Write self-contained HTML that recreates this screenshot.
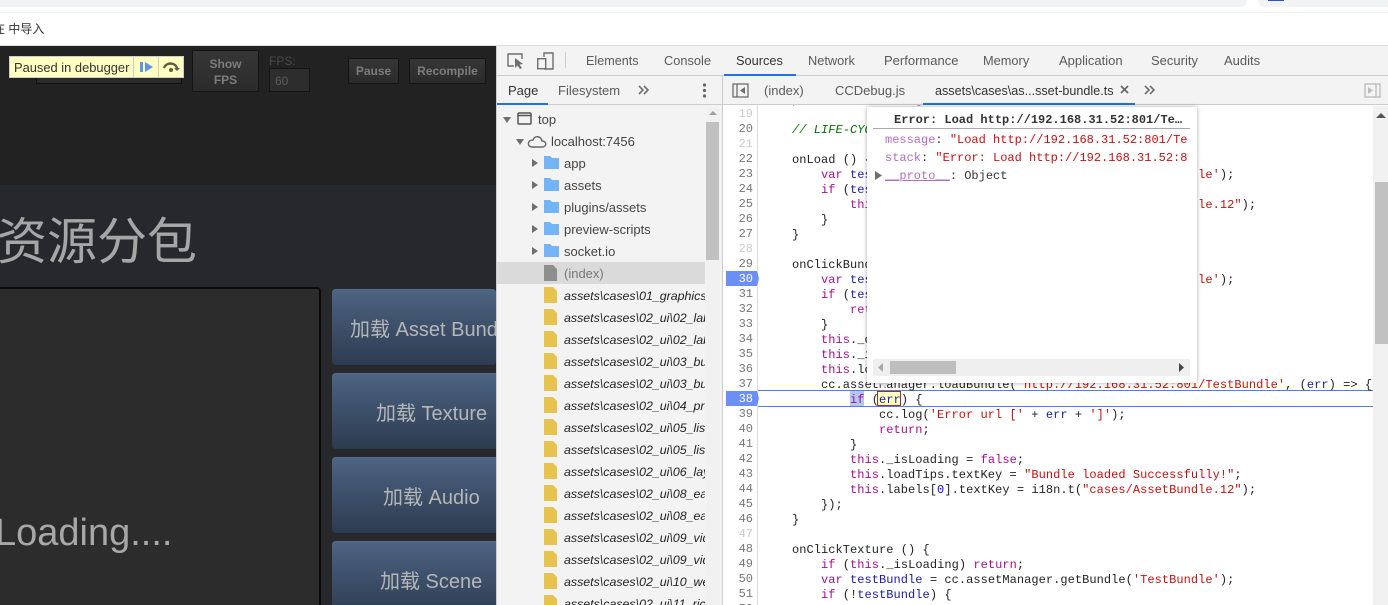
<!DOCTYPE html>
<html><head><meta charset="utf-8"><style>
html,body{margin:0;padding:0;width:1388px;height:605px;overflow:hidden;background:#fff}
body{position:relative;font-family:"Liberation Sans","Noto Sans CJK SC",sans-serif}
.a{position:absolute;white-space:nowrap}
.btn{position:absolute;left:332px;width:170px;height:76px;border-radius:4px;background:linear-gradient(#4d6483,#2d3b50);color:#b4b6b8;font-size:20px;line-height:82px;box-sizing:border-box;white-space:nowrap;box-shadow:inset 0 1px 0 #566d8c}
.gb{position:absolute;box-sizing:border-box;background:linear-gradient(#363636,#2b2b2b);border:1px solid #141414;border-radius:2px;color:#7c7c7c;font:bold 12px/16px "Liberation Sans",sans-serif;text-align:center}
.t{position:absolute;font-size:13px;line-height:16px;color:#5a5a5a;white-space:nowrap}
.row{position:absolute;height:22px;line-height:24px;font-size:13px;color:#444;white-space:nowrap;left:0;width:208px;overflow:hidden}
.row span{position:absolute;left:67px}
.f span{font-style:italic;font-size:12.4px;color:#222}
.ic{position:absolute;left:47px;top:3px}
.ar{position:absolute;width:0;height:0;border-left:6px solid #6e6e6e;border-top:4px solid transparent;border-bottom:4px solid transparent;left:35px;top:7px}
pre{margin:0;font:12px/15px "Liberation Mono",monospace;white-space:pre !important}
.k{color:#aa0d91}.s{color:#c81010}.v{color:#1a1aa6}.c{color:#007400;font-style:italic}.n{color:#1c00cf}
.g{color:#ccc}
</style></head><body>
<div class="a" style="left:0;top:0;width:1247px;height:7px;background:#f1f3f4;border-radius:0 0 8px 0"></div>
<div class="a" style="left:1258px;top:0;width:130px;height:7px;background:#f1f3f4;border-radius:0 0 0 8px"></div>
<div class="a" style="left:1268px;top:0;width:16px;height:1px;background:#2b50d8"></div>
<div class="a" style="left:0;top:12px;width:1388px;height:1px;background:#f1f3f4"></div>
<div class="a" style="left:-7px;top:21px;font-size:12px;line-height:17px;color:#333">在 中导入</div>
<div class="a" style="left:0;top:45px;width:1388px;height:1px;background:#ddd"></div>

<div class="a" style="left:0;top:46px;width:496px;height:559px;background:#27282c;overflow:hidden">
  <div class="a" style="left:0;top:0;width:496px;height:139px;background:#222"></div>
  <div class="a" style="left:-3px;top:161px;font-size:50px;line-height:62px;color:#a6a6a6;font-family:'Noto Sans CJK SC',sans-serif">资源分包</div>
  <div class="a" style="left:-20px;top:241px;width:341px;height:340px;background:#2c2c2c;border:1px solid #0a0a0a;border-width:2px 2px 0 0;border-radius:4px;box-sizing:border-box"></div>
  <div class="a" style="left:-5px;top:465px;font-size:38px;line-height:44px;color:#a8a8a8">Loading....</div>
  <div class="btn" style="top:243px;padding-left:18px;width:164px;overflow:hidden">加载 Asset Bundle</div>
  <div class="btn" style="top:327px;padding-left:44px">加载 Texture</div>
  <div class="btn" style="top:411px;padding-left:51px">加载 Audio</div>
  <div class="btn" style="top:495px;padding-left:48px">加载 Scene</div>
  <div class="a" style="left:36px;top:12px;width:146px;height:26px;background:#2a2a2a;border:1px solid #111;box-sizing:border-box"></div>
  <div class="gb" style="left:192px;top:4px;width:67px;height:42px;padding-top:5px">Show<br>FPS</div>
  <div class="a" style="left:269px;top:7px;font-size:12px;line-height:16px;color:#4a4a4a">FPS:</div>
  <div class="a" style="left:269px;top:22px;width:41px;height:24px;background:#2d2d2d;border:1px solid #141414;box-sizing:border-box;color:#5c5c5c;font-size:12px;line-height:24px;padding-left:5px">60</div>
  <div class="gb" style="left:348px;top:12px;width:51px;height:26px;line-height:25px">Pause</div>
  <div class="gb" style="left:409px;top:12px;width:77px;height:26px;line-height:25px">Recompile</div>
</div>

<div class="a" style="left:9px;top:56px;width:175px;height:22px;background:#ffffc2;border:1px solid #ccc;box-sizing:border-box"></div>
<div class="a" style="left:14px;top:60px;font-size:12.9px;line-height:16px;color:#333">Paused in debugger</div>
<div class="a" style="left:133px;top:57px;width:1px;height:20px;background:#ccc"></div>
<div class="a" style="left:158px;top:57px;width:1px;height:20px;background:#ccc"></div>
<svg class="a" style="left:139px;top:61px" width="15" height="12"><rect x="1" y="1" width="3" height="10" fill="#5f95ea"/><path d="M6 1L14 6L6 11Z" fill="#5f95ea"/></svg>
<svg class="a" style="left:162px;top:61px" width="19" height="12"><path d="M2 7C4 1 13 1 15 7" fill="none" stroke="#5e5e46" stroke-width="2.4"/><path d="M12 7h6l-3 3z" fill="#5e5e46"/><circle cx="9" cy="9" r="2" fill="#5e5e46"/></svg>

<!-- devtools -->
<div class="a" style="left:496px;top:46px;width:892px;height:559px;background:#f3f3f3;overflow:hidden">
  <div class="a" style="left:0;top:0;width:1px;height:559px;background:#ccc"></div>
  <div class="a" style="left:1px;top:29px;width:891px;height:1px;background:#ccc"></div>
  <div class="a" style="left:1px;top:58px;width:891px;height:1px;background:#ccc"></div>
  <div class="a" style="left:226px;top:30px;width:1px;height:529px;background:#ccc"></div>
  <div class="a" style="left:228px;top:28px;width:72px;height:2px;background:#1a73e8"></div>
  <div class="a" style="left:1px;top:57px;width:51px;height:2px;background:#1a73e8"></div>
  <div class="a" style="left:427px;top:57px;width:212px;height:2px;background:#1a73e8"></div>
</div>
<svg class="a" style="left:506px;top:52px" width="20" height="18"><path d="M8 14H2V2H16V7" fill="none" stroke="#6e6e6e" stroke-width="1.4"/><path d="M9 6L9 16L11.5 13.5L14 17L16 16L13.5 12.5L17 12Z" fill="#6e6e6e"/></svg>
<svg class="a" style="left:535px;top:51px" width="20" height="19"><path d="M9 6V2H18V18H9" fill="none" stroke="#6e6e6e" stroke-width="1.4"/><rect x="2.7" y="7.7" width="8" height="10" fill="#f3f3f3" stroke="#6e6e6e" stroke-width="1.4"/></svg>
<div class="a" style="left:565px;top:52px;width:1px;height:16px;background:#ccc"></div>
<div class="t" style="left:586px;top:53px;font-size:12.6px">Elements</div>
<div class="t" style="left:664px;top:53px;font-size:12.8px">Console</div>
<div class="t" style="left:736px;top:53px;color:#333;font-size:12.8px">Sources</div>
<div class="t" style="left:808px;top:53px;font-size:12.8px">Network</div>
<div class="t" style="left:884px;top:53px">Performance</div>
<div class="t" style="left:983px;top:53px;font-size:12.8px">Memory</div>
<div class="t" style="left:1059px;top:53px">Application</div>
<div class="t" style="left:1151px;top:53px">Security</div>
<div class="t" style="left:1224px;top:53px">Audits</div>

<div class="t" style="left:508px;top:83px;color:#333">Page</div>
<div class="t" style="left:558px;top:83px">Filesystem</div>
<svg class="a" style="left:638px;top:85px" width="12" height="10"><path d="M1 1L5 5L1 9M6 1L10 5L6 9" fill="none" stroke="#6e6e6e" stroke-width="1.6"/></svg>
<svg class="a" style="left:702px;top:83px" width="5" height="15"><circle cx="2.5" cy="2" r="1.6" fill="#666"/><circle cx="2.5" cy="7.5" r="1.6" fill="#666"/><circle cx="2.5" cy="13" r="1.6" fill="#666"/></svg>

<svg class="a" style="left:732px;top:83px" width="18" height="15"><rect x="1" y="1" width="15" height="13" fill="none" stroke="#6e6e6e" stroke-width="1.3"/><path d="M5 1V14" stroke="#6e6e6e" stroke-width="1.3"/><path d="M13 4L8 7.5L13 11Z" fill="#6e6e6e"/></svg>
<div class="t" style="left:764px;top:83px">(index)</div>
<div class="t" style="left:835px;top:83px">CCDebug.js</div>
<div class="t" style="left:935px;top:83px;color:#333;font-size:12.6px">assets\cases\as...sset-bundle.ts</div>
<svg class="a" style="left:1120px;top:85px" width="9" height="9"><path d="M1 1L8 8M8 1L1 8" stroke="#666" stroke-width="1.7"/></svg>
<svg class="a" style="left:1144px;top:85px" width="12" height="10"><path d="M1 1L5 5L1 9M6 1L10 5L6 9" fill="none" stroke="#6e6e6e" stroke-width="1.6"/></svg>
<svg class="a" style="left:1364px;top:83px" width="18" height="15"><rect x="1" y="1" width="15" height="13" fill="none" stroke="#bbb" stroke-width="1.3"/><path d="M12 1V14" stroke="#bbb" stroke-width="1.3"/><path d="M4 4L9 7.5L4 11Z" fill="#bbb"/></svg>

<!-- navigator -->
<div class="a" style="left:497px;top:108px;width:225px;height:497px;overflow:hidden;background:#f3f3f3">
  <div class="a" style="left:209px;top:0;width:14px;height:497px;background:#f1f1f1"></div>
  <div class="a" style="left:209px;top:14px;width:13px;height:138px;background:#c1c1c1"></div>
  <svg class="a" style="left:211px;top:0" width="10" height="8"><path d="M1 7L5 3L9 7Z" fill="#a0a0a0"/></svg>
  <div class="row" style="top:0;width:208px"><i class="ar" style="left:6px;top:9px;border-top:6px solid #6e6e6e;border-left:4px solid transparent;border-right:4px solid transparent;border-bottom:0"></i><svg class="ic" style="left:20px;top:4px" width="15" height="13"><rect x="1" y="1" width="13" height="11" rx="1" fill="none" stroke="#555" stroke-width="1.5"/><path d="M1 3.5H14" stroke="#555" stroke-width="1.5"/></svg><span style="left:41px">top</span></div>
  <div class="row" style="top:22px"><i class="ar" style="left:19px;top:9px;border-top:6px solid #6e6e6e;border-left:4px solid transparent;border-right:4px solid transparent;border-bottom:0"></i><svg class="ic" style="left:30px;top:5px" width="20" height="13"><path d="M5 12H15C20 12 20 6 15 6C14 1 8 0 6 5C0 5 0 12 5 12Z" fill="none" stroke="#666" stroke-width="1.4"/></svg><span style="left:54px">localhost:7456</span></div>
  <div class="row" style="top:44px"><i class="ar"></i><svg class="ic" width="16" height="15"><path d="M0 1H6L8 3H15V14H0Z" fill="#72b4f5"/></svg><span>app</span></div>
  <div class="row" style="top:66px"><i class="ar"></i><svg class="ic" width="16" height="15"><path d="M0 1H6L8 3H15V14H0Z" fill="#72b4f5"/></svg><span>assets</span></div>
  <div class="row" style="top:88px"><i class="ar"></i><svg class="ic" width="16" height="15"><path d="M0 1H6L8 3H15V14H0Z" fill="#72b4f5"/></svg><span>plugins/assets</span></div>
  <div class="row" style="top:110px"><i class="ar"></i><svg class="ic" width="16" height="15"><path d="M0 1H6L8 3H15V14H0Z" fill="#72b4f5"/></svg><span>preview-scripts</span></div>
  <div class="row" style="top:132px"><i class="ar"></i><svg class="ic" width="16" height="15"><path d="M0 1H6L8 3H15V14H0Z" fill="#72b4f5"/></svg><span>socket.io</span></div>
  <div class="row" style="top:154px;background:#dadada"><svg class="ic" width="14" height="16"><path d="M0 0H9L13 4V16H0Z" fill="#8e8e8e"/></svg><span style="color:#777">(index)</span></div>
  <div class="row f" style="top:176px"><svg class="ic" width="14" height="16"><path d="M0 0H9L13 4V16H0Z" fill="#e6c24f"/></svg><span>assets\cases\01_graphics</span></div>
  <div class="row f" style="top:198px"><svg class="ic" width="14" height="16"><path d="M0 0H9L13 4V16H0Z" fill="#e6c24f"/></svg><span>assets\cases\02_ui\02_label</span></div>
  <div class="row f" style="top:220px"><svg class="ic" width="14" height="16"><path d="M0 0H9L13 4V16H0Z" fill="#e6c24f"/></svg><span>assets\cases\02_ui\02_label</span></div>
  <div class="row f" style="top:242px"><svg class="ic" width="14" height="16"><path d="M0 0H9L13 4V16H0Z" fill="#e6c24f"/></svg><span>assets\cases\02_ui\03_button</span></div>
  <div class="row f" style="top:264px"><svg class="ic" width="14" height="16"><path d="M0 0H9L13 4V16H0Z" fill="#e6c24f"/></svg><span>assets\cases\02_ui\03_button</span></div>
  <div class="row f" style="top:286px"><svg class="ic" width="14" height="16"><path d="M0 0H9L13 4V16H0Z" fill="#e6c24f"/></svg><span>assets\cases\02_ui\04_progress</span></div>
  <div class="row f" style="top:308px"><svg class="ic" width="14" height="16"><path d="M0 0H9L13 4V16H0Z" fill="#e6c24f"/></svg><span>assets\cases\02_ui\05_list</span></div>
  <div class="row f" style="top:330px"><svg class="ic" width="14" height="16"><path d="M0 0H9L13 4V16H0Z" fill="#e6c24f"/></svg><span>assets\cases\02_ui\05_list</span></div>
  <div class="row f" style="top:352px"><svg class="ic" width="14" height="16"><path d="M0 0H9L13 4V16H0Z" fill="#e6c24f"/></svg><span>assets\cases\02_ui\06_layout</span></div>
  <div class="row f" style="top:374px"><svg class="ic" width="14" height="16"><path d="M0 0H9L13 4V16H0Z" fill="#e6c24f"/></svg><span>assets\cases\02_ui\08_ease</span></div>
  <div class="row f" style="top:396px"><svg class="ic" width="14" height="16"><path d="M0 0H9L13 4V16H0Z" fill="#e6c24f"/></svg><span>assets\cases\02_ui\08_ease</span></div>
  <div class="row f" style="top:418px"><svg class="ic" width="14" height="16"><path d="M0 0H9L13 4V16H0Z" fill="#e6c24f"/></svg><span>assets\cases\02_ui\09_video</span></div>
  <div class="row f" style="top:440px"><svg class="ic" width="14" height="16"><path d="M0 0H9L13 4V16H0Z" fill="#e6c24f"/></svg><span>assets\cases\02_ui\09_video</span></div>
  <div class="row f" style="top:462px"><svg class="ic" width="14" height="16"><path d="M0 0H9L13 4V16H0Z" fill="#e6c24f"/></svg><span>assets\cases\02_ui\10_webview</span></div>
  <div class="row f" style="top:484px"><svg class="ic" width="14" height="16"><path d="M0 0H9L13 4V16H0Z" fill="#e6c24f"/></svg><span>assets\cases\02_ui\11_richtext</span></div>
</div>

<!-- editor -->
<div class="a" style="left:723px;top:105px;width:665px;height:500px;background:#fff;overflow:hidden">
  <div class="a" style="left:34px;top:0;width:1px;height:500px;background:#ddd"></div>
  <div class="a" style="left:3px;top:166px;width:33px;height:15px;background:#6c8ff5;clip-path:polygon(0 0,31px 0,100% 50%,31px 100%,0 100%)"></div>
  <div class="a" style="left:3px;top:286px;width:33px;height:15px;background:#6c8ff5;clip-path:polygon(0 0,31px 0,100% 50%,31px 100%,0 100%)"></div>
  <div class="a" style="left:35px;top:285px;width:615px;height:1px;background:#4a80e8"></div>
  <div class="a" style="left:35px;top:301px;width:615px;height:1px;background:#4a80e8"></div>
  <div class="a" style="left:127px;top:286px;width:14px;height:15px;background:#b3c6f2"></div>
  <div class="a" style="left:154px;top:286px;width:24px;height:15px;background:#ffffc2;border:1px solid #a52a2a;box-sizing:border-box"></div>
<pre class="a" style="left:0;top:2px;width:30px;text-align:right;color:#777"><span class="g">19</span>
20
<span class="g">21</span>
22
23
24
25
26
27
<span class="g">28</span>
29
<span style="color:#fff">30</span>
31
32
33
34
35
36
37
<span style="color:#fff">38</span>
39
40
41
42
43
44
45
46
<span class="g">47</span>
48
49
50
51
52</pre>
<pre class="a" style="left:40px;top:-12px;color:#222;letter-spacing:.05px">    <span class="k">private</span> <span class="v">_isLoading</span> = <span class="k">false</span>;

    <span class="c">// LIFE-CYCLE CALLBACKS:</span>

    onLoad () {
        <span class="k">var</span> <span class="v">testBundle</span> = cc.assetManager.getBundle(<span class="s">'TestBundle'</span>);
        <span class="k">if</span> (<span class="v">testBundle</span>) {
            <span class="k">this</span>.labels[<span class="n">0</span>].textKey = i18n.t(<span class="s">"cases/AssetBundle.12"</span>);
        }
    }

    onClickBundle () {
        <span class="k">var</span> <span class="v">testBundle</span> = cc.assetManager.getBundle(<span class="s">'TestBundle'</span>);
        <span class="k">if</span> (<span class="v">testBundle</span> || <span class="k">this</span>._isLoading) {
            <span class="k">return</span>;
        }
        <span class="k">this</span>._onClear();
        <span class="k">this</span>._isLoading = <span class="k">true</span>;
        <span class="k">this</span>.loadTips.textKey = <span class="s">"Bundle Loading...."</span>;
        cc.assetManager.loadBundle(<span class="s">'http://192.168.31.52:801/TestBundle'</span>, (<span class="v">err</span>) =&gt; {
            <span class="k">if</span> (<span class="v">err</span>) {
                cc.log(<span class="s">'Error url ['</span> + <span class="v">err</span> + <span class="s">']'</span>);
                <span class="k">return</span>;
            }
            <span class="k">this</span>._isLoading = <span class="k">false</span>;
            <span class="k">this</span>.loadTips.textKey = <span class="s">"Bundle loaded Successfully!"</span>;
            <span class="k">this</span>.labels[<span class="n">0</span>].textKey = i18n.t(<span class="s">"cases/AssetBundle.12"</span>);
        });
    }

    onClickTexture () {
        <span class="k">if</span> (<span class="k">this</span>._isLoading) <span class="k">return</span>;
        <span class="k">var</span> <span class="v">testBundle</span> = cc.assetManager.getBundle(<span class="s">'TestBundle'</span>);
        <span class="k">if</span> (!<span class="v">testBundle</span>) {</pre>
  <div class="a" style="left:650px;top:1px;width:15px;height:499px;background:#f1f1f1"></div>
  <div class="a" style="left:652px;top:77px;width:13px;height:162px;background:#c1c1c1"></div>
  <svg class="a" style="left:652px;top:6px" width="12" height="8"><path d="M1 7L6 2L11 7Z" fill="#555"/></svg>
</div>

<!-- popover -->
<div class="a" style="left:884px;top:380px;width:0;height:0;border-left:8px solid transparent;border-right:8px solid transparent;border-top:8px solid #e9e9e9;margin-left:-8px"></div>
<div class="a" style="left:867px;top:107px;width:330px;height:276px;background:#fff;box-shadow:0 0 4px rgba(0,0,0,.35);border-radius:2px;overflow:hidden">
  <pre class="a" style="left:27px;top:6px;font-weight:bold;color:#333">Error: Load http://192.168.31.52:801/Te…</pre>
  <div class="a" style="left:6px;top:21px;width:317px;height:1px;background:#aaa"></div>
  <div class="a" style="left:18px;top:26px;width:303px;overflow:hidden"><pre style="color:#333"><span style="color:#b56bc6">message</span>: <span class="s">"Load http://192.168.31.52:801/TestBundle"</span></pre></div>
  <div class="a" style="left:18px;top:44px;width:303px;overflow:hidden"><pre style="color:#333"><span style="color:#b56bc6">stack</span>: <span class="s">"Error: Load http://192.168.31.52:801/TestBundle"</span></pre></div>
  <pre class="a" style="left:18px;top:62px;color:#333"><span style="color:#b56bc6;text-decoration:underline">__proto__</span>: Object</pre>
  <svg class="a" style="left:8px;top:64px" width="7" height="9"><path d="M0 0L7 4.5L0 9Z" fill="#6e6e6e"/></svg>
  <div class="a" style="left:6px;top:252px;width:317px;height:17px;background:#efefef"></div>
  <div class="a" style="left:23px;top:254px;width:66px;height:13px;background:#bebebe"></div>
  <svg class="a" style="left:11px;top:256px" width="6" height="9"><path d="M5 0L0 4.5L5 9Z" fill="#a8a8a8"/></svg>
  <svg class="a" style="left:312px;top:256px" width="6" height="9"><path d="M0 0L5 4.5L0 9Z" fill="#444"/></svg>
</div>
</body></html>
